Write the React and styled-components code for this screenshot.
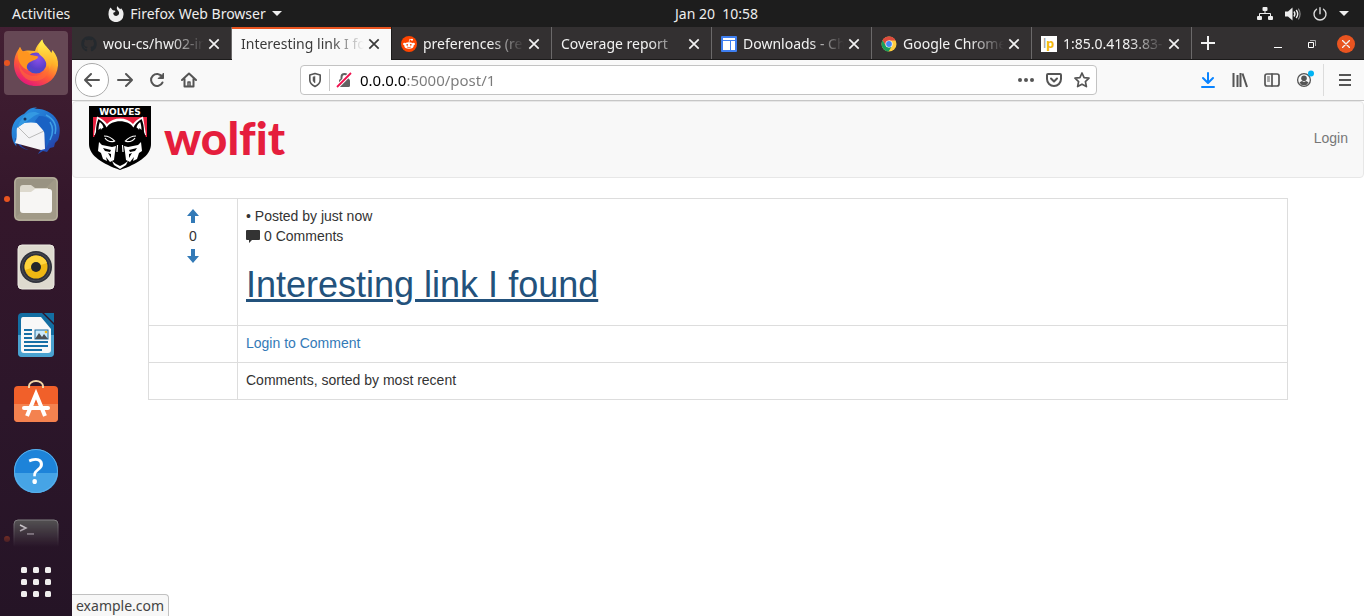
import React from "react";
import styled, { createGlobalStyle, css } from "styled-components";
import { FaGithub } from "react-icons/fa";

const uiFont = '"Noto Sans", "Open Sans", sans-serif';
const pageFont = '"Liberation Sans", Arial, sans-serif';

const GlobalStyle = createGlobalStyle`
  *, *::before, *::after { box-sizing: border-box; }
  body { margin: 0; background: #fff; }
  button { border: 0; padding: 0; background: none; color: inherit; font: inherit; cursor: pointer; }
  svg { display: block; flex: none; }
`;

/* ---------- desktop shell ---------- */

const Desktop = styled.div`
  display: flex;
  flex-direction: column;
  height: 100vh;
  font: 14px/20px ${uiFont};
`;

const TopBar = styled.header`
  display: grid;
  grid-template-columns: 1fr auto 1fr;
  align-items: center;
  flex: none;
  height: 27px;
  padding: 0 15px 0 12px;
  background: #1d1d1d;
  color: #eee;
`;

const TopGroup = styled.div`
  display: flex;
  align-items: center;
  justify-content: ${(p) => (p.$end ? "flex-end" : "flex-start")};
  gap: ${(p) => (p.$end ? "12px" : "38px")};
`;

const TopButton = styled.button`
  display: flex;
  align-items: center;
  gap: 6px;
`;

const Clock = styled.time`
  margin-left: 72px;
  white-space: pre;
`;

const Workspace = styled.div`
  display: flex;
  flex: 1;
  min-height: 0;
`;

/* ---------- dock ---------- */

const Dock = styled.nav`
  display: flex;
  flex-direction: column;
  flex: none;
  width: 72px;
  background: linear-gradient(#431f33, #34172b 30%, #2c162a 65%, #251426);
`;

const DockList = styled.div`
  display: flex;
  flex-direction: column;
  gap: 4px;
  flex: 1;
  min-height: 0;
  padding: 4px 4px 0;
  overflow: hidden;
  mask-image: linear-gradient(#000 calc(100% - 28px), transparent);
`;

const DockButton = styled.button`
  position: relative;
  display: grid;
  place-items: center;
  flex: none;
  height: 64px;
  border-radius: 4px;
  background: ${(p) => (p.$active ? "#664855" : "transparent")};
  ${(p) =>
    p.$running &&
    css`
      &::before {
        content: "";
        position: absolute;
        left: 0;
        top: 29px;
        width: 6px;
        height: 6px;
        border-radius: 50%;
        background: #e95420;
      }
    `}
`;

const AppsButton = styled.button`
  display: grid;
  place-items: center;
  flex: none;
  height: 69px;
`;

/* ---------- browser ---------- */

const Browser = styled.section`
  display: flex;
  flex-direction: column;
  flex: 1;
  min-width: 0;
`;

const TabStrip = styled.div`
  display: flex;
  flex: none;
  height: 33px;
  background: #333031;
  border-bottom: 1px solid #1c1b1b;
  color: #f2f2f2;
`;

const Tab = styled.div`
  display: flex;
  align-items: center;
  flex: 0 1 160px;
  min-width: 0;
  padding: 2px 7px 0 9px;
  border-right: 1px solid #6b696a;
  ${(p) =>
    p.$active &&
    css`
      height: 33px;
      padding-top: 1px;
      background: #f9f9f9;
      color: #3a3a3a;
      border-right-color: #1c1b1b;
      box-shadow: inset 0 2px #e95420;
    `}
`;

const TabLabel = styled.button`
  display: flex;
  align-items: center;
  gap: 6px;
  flex: 1;
  min-width: 0;
  overflow: hidden;
  white-space: nowrap;
  mask-image: linear-gradient(90deg, #000 calc(100% - 34px), transparent);
`;

const TabClose = styled.button`
  display: grid;
  place-items: center;
  width: 20px;
  height: 20px;
`;

const NewTab = styled.button`
  display: grid;
  place-items: center;
  width: 32px;
`;

const WindowControls = styled.div`
  display: flex;
  align-items: center;
  gap: 16px;
  margin-left: auto;
  padding: 2px 9px 0 0;
`;

const WindowButton = styled.button`
  display: grid;
  place-items: center;
  width: 18px;
  height: 18px;
  border-radius: 50%;
  background: ${(p) => (p.$close ? "#e95420" : "none")};
`;

const Toolbar = styled.div`
  display: flex;
  align-items: center;
  flex: none;
  height: 41px;
  padding: 0 3px;
  background: #f9f9f9;
  border-bottom: 1px solid #c6c6c6;
  color: #555;
`;

const ToolButton = styled.button`
  display: grid;
  place-items: center;
  flex: none;
  width: 32px;
  height: 32px;
`;

const BackButton = styled(ToolButton)`
  width: 34px;
  height: 34px;
  border: 1px solid #aaa;
  border-radius: 50%;
  background: #fff;
`;

const MenuArea = styled.div`
  display: flex;
  margin-left: 3px;
  padding-left: 5px;
  border-left: 1px solid #dcdcdc;
`;

const AddressBar = styled.form`
  display: flex;
  align-items: center;
  flex: 1;
  min-width: 0;
  height: 30px;
  margin: 0 95px;
  padding: 0 6px;
  background: #fff;
  border: 1px solid #c3c3c3;
  border-radius: 4px;
`;

const SiteInfo = styled.div`
  display: flex;
  align-items: center;
  gap: 6px;
`;

const Divider = styled.span`
  width: 1px;
  height: 22px;
  background: #c8c8c8;
`;

const PageActions = styled.div`
  display: flex;
  gap: 12px;
`;

const AddressInput = styled.input`
  flex: 1;
  min-width: 0;
  margin: 0 8px;
  padding: 0;
  border: 0;
  outline: 0;
  font: 15px/22px ${uiFont};
  color: #333;
  background: linear-gradient(90deg, #000 47px, #7a7a7a 47px);
  background-clip: text;
  -webkit-text-fill-color: transparent;
`;

/* ---------- web page ---------- */

const Page = styled.main`
  position: relative;
  flex: 1;
  min-height: 0;
  overflow: hidden;
  background: #fff;
  color: #333;
  font: 14px/20px ${pageFont};
`;

const Navbar = styled.nav`
  display: flex;
  align-items: center;
  justify-content: space-between;
  height: 77px;
  margin-bottom: 20px;
  padding: 0 15px 4px 16px;
  background: #f8f8f8;
  border: 1px solid #e7e7e7;
  border-radius: 4px;
`;

const Brand = styled.a`
  display: flex;
  align-items: center;
  gap: 13px;
  color: #e51e3d;
  font: 900 46px/60px Lato, sans-serif;
  font-variant-ligatures: none;
  text-decoration: none;
`;

const NavLink = styled.a`
  color: #777;
  text-decoration: none;
`;

const Container = styled.div`
  max-width: 1170px;
  margin: 0 auto;
  padding: 0 15px;
`;

const PostTable = styled.table`
  width: 100%;
  border-collapse: collapse;
  table-layout: fixed;
`;

const Cell = styled.td`
  padding: 7px 8px 9px;
  border: 1px solid #ddd;
  vertical-align: top;
  text-align: ${(p) => (p.$votes ? "center" : "left")};
  width: ${(p) => (p.$votes ? "89px" : "auto")};
`;

const VoteLink = styled.a`
  display: grid;
  place-items: center;
  height: 20px;
  color: #337ab7;
`;

const CommentCount = styled.div`
  display: flex;
  align-items: center;
  gap: 4px;
`;

const Title = styled.h1`
  margin: 19px 0 11px;
  font: 400 36px/40px ${pageFont};
`;

const TitleLink = styled.a`
  color: #23527c;
  text-decoration: underline;
`;

const TextLink = styled.a`
  color: #337ab7;
  text-decoration: none;
`;

const StatusPanel = styled.div`
  position: absolute;
  left: 0;
  bottom: 0;
  height: 22px;
  padding: 0 4px;
  background: #f7f7f7;
  border: 1px solid #c1c1c1;
  border-width: 1px 1px 0 0;
  border-top-right-radius: 4px;
  color: #444;
  font: 14px/22px ${uiFont};
`;

/* ---------- icons ---------- */

const Line = ({ size = 16, w = 2, children, ...rest }) => (
  <svg width={size} height={size} viewBox={`0 0 ${size} ${size}`} fill="none" stroke="currentColor" strokeWidth={w} strokeLinecap="round" strokeLinejoin="round" aria-hidden="true" {...rest}>
    {children}
  </svg>
);

const CrossIcon = () => (
  <Line size={12} w={1.7} strokeLinecap="butt">
    <path d="M1.3 1.3 10.7 10.7M10.7 1.3 1.3 10.7" />
  </Line>
);

const Caret = () => (
  <svg width="10" height="5" viewBox="0 0 10 5" fill="currentColor" aria-hidden="true">
    <path d="M0 0H10L5 5Z" />
  </svg>
);

const FirefoxSymbol = () => (
  <svg width="16" height="16" viewBox="0 0 16 16" aria-hidden="true">
    <path fill="#eee" d="M1.500 3 2.600 1.500 4.500 4c.8.600 2 .3 3 .900-.2 1.200-1.600 1.400-2.300 2 .1 2 1.400 3 3 3 2.300 0 3.400-2 2.700-4C10.200 4.200 7.500 3.500 9.500 0c.4 1.700 1.800 2.200 2.800 3.300l.8-1.100c1.600 1.800 2.700 3.800 2.400 6.500A7.500 7.400 0 0 1 .5 8.700C.4 6.500.7 4.700 1.500 3Z" />
  </svg>
);

const NetworkIcon = () => (
  <svg width="16" height="14" viewBox="0 0 16 14" fill="#eee" aria-hidden="true">
    <rect x="5.500" y="0" width="5" height="4" rx="1" />
    <rect x="0" y="9" width="5" height="4" rx="1" />
    <rect x="11" y="9" width="5" height="4" rx="1" />
    <path fill="none" stroke="#eee" d="M8 4v2.500M2.500 9V6.500h11V9" />
  </svg>
);

const VolumeIcon = () => (
  <svg width="16" height="14" viewBox="0 0 16 14" aria-hidden="true">
    <path fill="#eee" d="M0 4.500h3L7.500.5v13L3 9.500H0Z" />
    <path fill="none" stroke="#eee" strokeWidth="1.400" d="M9 4.500q1.800 2.500 0 5M11.200 3q3 4 0 8" />
    <path fill="none" stroke="#888" strokeWidth="1.200" d="M13.300 1.600q3.600 5.400 0 10.800" />
  </svg>
);

const PowerIcon = () => (
  <Line size={14} w={1.4} color="#ddd">
    <path d="M3.500 2.200a6 6 0 1 0 7 0M7 .7v6" />
  </Line>
);

const FirefoxIcon = () => (
  <svg width="48" height="48" viewBox="0 0 48 48" aria-hidden="true">
    <defs>
      <linearGradient id="fxBody" x1=".8" y1=".05" x2=".3" y2="1">
        <stop offset="0" stopColor="#fff04a" />
        <stop offset=".35" stopColor="#ffb129" />
        <stop offset=".65" stopColor="#ff5a36" />
        <stop offset="1" stopColor="#e3157c" />
      </linearGradient>
      <radialGradient id="fxGlobe" cx=".6" cy=".3" r=".8">
        <stop offset="0" stopColor="#8a4fe8" />
        <stop offset=".6" stopColor="#5a3fc9" />
        <stop offset="1" stopColor="#3b53c4" />
      </radialGradient>
      <linearGradient id="fxTail" x1="0" y1="0" x2="0" y2="1">
        <stop offset="0" stopColor="#fff450" />
        <stop offset="1" stopColor="#ff9a1f" />
      </linearGradient>
    </defs>
    <path fill="url(#fxBody)" d="M4 15C5 12 7 10 8 8c.8 2 1.500 3 3 4.500 3-1.500 8-1 12-.5 1-4 3.500-7.500 7.200-11.500 1 5 4.200 6.700 7 10.500 1 1.200 1.600 2 2 3l1.300-3c4 5 6 10 5.500 15.500C45 39 35.500 47 24 47 12 47 2.500 38.500 2 26c0-4 .5-8 2-11Z" />
    <circle cx="24" cy="24" r="10.500" fill="url(#fxGlobe)" />
    <path fill="url(#fxTail)" d="M30.200.5c1 5 4.200 6.700 7 10.500 5 7 3 18-3 22 2-6 0-12-5-16-4-3-5-8 1-16.500Z" />
    <path fill="#ff951f" d="M8 8c.8 2 1.500 3 3 4.500 3-1 6 0 7.500 3.500 3 .5 5.500.8 7.800 1.700-1 3.300-5.300 3.300-8.300 5.300-3 1.500-4 5-2.500 8C9 28 5 22 6 13Z" />
    <path fill="#ff6a35" opacity=".6" d="M7 25c3 9 11 14 20 11 5-1.500 8-5 9-10 3 7-2 15-12 16C14 43 7 35 7 25Z" />
  </svg>
);

const ThunderbirdIcon = () => (
  <svg width="50" height="48" viewBox="0 0 50 48" aria-hidden="true">
    <defs>
      <linearGradient id="tbBody" x1="0" y1="0" x2="1" y2="1">
        <stop offset="0" stopColor="#2d9be8" />
        <stop offset=".6" stopColor="#1f69c9" />
        <stop offset="1" stopColor="#28319a" />
      </linearGradient>
    </defs>
    <path fill="url(#tbBody)" d="M15 5C18 1 23 0 26 .5L23 2c9-1 18 3 23 11 4 7 3 15 1 20l-3 3-1 4-4 1-3 4-4-1-5 3c2-4 4-4 5-8L8 35c-2 0-4 2-2 5C1 35 0 28 1 21 3 13 8 9 13 7Z" />
    <path fill="#1d3f9f" d="M4 31c2 7 8 12 14 12-5-1-9-5-10-9Z" />
    <path fill="#f4f4f6" d="M6 21 13 16c7-1 14-1 20 3l1 23-4 1L4 36C7 30 5 25 6 21Z" />
    <path fill="none" stroke="#bbb" d="m7 20 11 11 15-7" />
    <path fill="#1a62c4" d="M28 9c12 0 16 8 14 18l-7 14c0-8 1-14-4-19l-7-8Z" />
    <path fill="#3499e2" d="M11 12C13 7 22 2 29 7c-5 0-8 4-14 8l-8 5c0-3 2-6 4-8Z" />
    <path fill="none" stroke="#3f9fe6" strokeWidth="1.500" d="M35 8c8 4 11 11 9 19M39 15c4 6 3 12 0 18" />
    <circle cx="14" cy="12" r="1.500" fill="#16345f" />
  </svg>
);

const FilesIcon = () => (
  <svg width="46" height="46" viewBox="0 0 46 46" aria-hidden="true">
    <rect x="1" y="1" width="44" height="44" rx="5" fill="#a19a87" />
    <path fill="#969080" d="M5 2h38L2 42V5q0-3 3-3Z" opacity=".7" />
    <rect x="2" y="2" width="42" height="42" rx="4" fill="none" stroke="#b8b19f" />
    <path fill="#ddd9cd" d="M7 12q0-3 3-3h8l4 3h13v10H7Z" />
    <rect x="7" y="13" width="32" height="24" rx="3" fill="#f7f6f4" />
    <path fill="#ddd9cd" d="M7 13h15l-4 3H7Z" />
  </svg>
);

const RhythmboxIcon = () => (
  <svg width="38" height="46" viewBox="0 0 38 46" aria-hidden="true">
    <rect x="1" y="1" width="36" height="44" rx="4" fill="#dedacf" stroke="#eceae2" />
    <circle cx="19" cy="23" r="16" fill="#30323b" />
    <circle cx="19" cy="23" r="14" fill="none" stroke="#4b4d55" />
    <circle cx="19" cy="23" r="11.500" fill="#efb813" />
    <path fill="#ffd53d" d="M19 11.500A11.500 11.500 0 0 0 8 26l22-7a11.500 11.500 0 0 0-11-7.500Z" />
    <circle cx="19" cy="23" r="5" fill="#25262a" />
  </svg>
);

const WriterIcon = () => (
  <svg width="38" height="46" viewBox="0 0 38 46" aria-hidden="true">
    <path fill="#136ea2" d="M5 1h20l12 12v28q0 4-4 4H5q-4 0-4-4V5q0-4 4-4Z" />
    <path fill="#4aa2d0" d="M1 23h36v18q0 4-4 4H5q-4 0-4-4Z" />
    <path fill="#136ea2" d="M27 1h10v10Z" />
    <path fill="#f8f8f8" d="M6 5h18l10 12v21q0 3-3 3H7q-3 0-3-3V8q0-3 2-3Z" />
    <path stroke="#176fa6" strokeWidth="2" d="M7 18h8M7 22h8M7 26h8M7 30h24M7 34h24M7 38h18" />
    <rect x="18" y="18" width="13" height="9" fill="#cae9fb" stroke="#1c6ea4" />
    <path fill="#4b5055" d="m18 27 4-6 3 4 2-3 4 5Z" />
    <circle cx="29" cy="20" r="1.300" fill="#f5b915" />
  </svg>
);

const SoftwareIcon = () => (
  <svg width="46" height="46" viewBox="0 0 46 46" aria-hidden="true">
    <rect x="1" y="6" width="44" height="36" rx="4" fill="#f1602a" />
    <path fill="#f4824f" d="M1 24h44v14q0 4-4 4H5q-4 0-4-4Z" />
    <path fill="none" stroke="#f3d6a5" strokeWidth="2" d="M16 8V6a7 5 0 0 1 14 0v2" />
    <path fill="none" stroke="#fff" strokeWidth="4" d="m14 36 9-22 9 22" />
    <rect x="9" y="26" width="28" height="4" rx="2" fill="#fff" />
  </svg>
);

const HelpIcon = () => (
  <svg width="46" height="46" viewBox="0 0 46 46" aria-hidden="true">
    <circle cx="23" cy="23" r="22" fill="#1d83d9" />
    <path fill="#46a4e6" d="M1 25a22 20 0 0 0 44 0Z" />
    <circle cx="23" cy="23" r="21.500" fill="none" stroke="#5bb0ea" />
    <text x="23" y="36" fill="#fff" fontFamily="Noto Sans, sans-serif" fontSize="36" textAnchor="middle">?</text>
  </svg>
);

const TerminalIcon = () => (
  <svg width="46" height="40" viewBox="0 0 46 40" aria-hidden="true">
    <rect x="1" y="1" width="44" height="38" rx="4" fill="#555354" stroke="#858485" />
    <path fill="none" stroke="#fff" strokeWidth="1.500" d="m7 6 6 3-6 3M14 15h7" />
  </svg>
);

const AppsIcon = () => (
  <svg width="30" height="30" viewBox="0 0 30 30" fill="#f0eeee" aria-hidden="true">
    {[0, 12, 24].map((y) => [0, 12, 24].map((x) => <rect key={`${x}-${y}`} x={x} y={y} width="6" height="6" rx="1.500" />))}
  </svg>
);

const RedditIcon = () => (
  <svg width="16" height="16" viewBox="0 0 16 16" aria-hidden="true">
    <circle cx="8" cy="8" r="8" fill="#ff4500" />
    <ellipse cx="8" cy="9.500" rx="4.700" ry="3.300" fill="#fff" />
    <circle cx="3.400" cy="8" r="1.300" fill="#fff" />
    <circle cx="12.600" cy="8" r="1.300" fill="#fff" />
    <circle cx="11" cy="3.800" r="1" fill="#fff" />
    <path fill="none" stroke="#fff" strokeWidth=".7" d="m8 6.500.7-3.200 2.300.5" />
    <circle cx="6.200" cy="8.800" r=".9" fill="#ff4500" />
    <circle cx="9.800" cy="8.800" r=".9" fill="#ff4500" />
    <path fill="none" stroke="#ff4500" strokeWidth=".7" d="M6 11q2 1.200 4 0" />
  </svg>
);

const SitesIcon = () => (
  <svg width="16" height="16" viewBox="0 0 16 16" aria-hidden="true">
    <rect width="16" height="16" rx="1" fill="#3f7ff0" />
    <path fill="#fff" d="M2 2h12v2H2ZM2 5h7v9H2ZM10 5h4v9h-4Z" />
  </svg>
);

const ChromeIcon = () => (
  <svg width="16" height="16" viewBox="0 0 16 16" aria-hidden="true">
    <circle cx="8" cy="8" r="7.500" fill="#ffcd40" />
    <path fill="#dd4b3e" d="M1.500 4.200A7.500 7.500 0 0 1 14.600 4.500H8L4.900 9.700Z" />
    <path fill="#1a9e5c" d="M1.500 4.200 4.900 9.800 8 11.500l3-1.700-3.300 5.700A7.500 7.500 0 0 1 1.500 4.200Z" />
    <circle cx="8" cy="8" r="3.600" fill="#fff" />
    <circle cx="8" cy="8" r="2.900" fill="#4688f4" />
  </svg>
);

const LaunchpadIcon = () => (
  <svg width="16" height="16" viewBox="0 0 16 16" aria-hidden="true">
    <rect width="16" height="16" fill="#fff" />
    <text x="2" y="12" fontFamily="Noto Sans, sans-serif" fontSize="13" fill="#999">
      l<tspan fill="#f3b90d" fontWeight="700">p</tspan>
    </text>
  </svg>
);

const InsecureIcon = () => (
  <svg width="16" height="16" viewBox="0 0 16 16" aria-hidden="true">
    <rect x="3" y="7" width="11" height="8" rx="1.500" fill="#616161" />
    <path fill="none" stroke="#616161" strokeWidth="2" d="M5.500 7V5a3 3 0 0 1 6 0v2" />
    <path stroke="#fff" strokeWidth="4" d="M1 15 15 1" />
    <path stroke="#f0114e" strokeWidth="1.800" d="M1 15 15 1" />
  </svg>
);

const AccountIcon = () => (
  <svg width="20" height="20" viewBox="0 0 20 20" aria-hidden="true">
    <circle cx="10" cy="10" r="6.400" fill="none" stroke="#555" strokeWidth="1.300" />
    <circle cx="10" cy="8.300" r="2.800" fill="#555" />
    <path fill="#555" d="M5.500 12.500q1.500-1.500 2.500-1.500l2 1 2-1q1 0 2.500 1.500a5 5 0 0 1-9 0Z" />
    <circle cx="17" cy="3.500" r="3" fill="#00b3f4" />
  </svg>
);

const ArrowIcon = ({ down }) => (
  <svg width="12" height="14" viewBox="0 0 12 14" fill="currentColor" aria-hidden="true">
    <path d={down ? "M4 0h4v7h4L6 14 0 7h4Z" : "M4 14h4V7h4L6 0 0 7h4Z"} />
  </svg>
);

const CommentIcon = () => (
  <svg width="14" height="14" viewBox="0 0 14 14" fill="#333" aria-hidden="true">
    <path d="M1 1h12q1 0 1 1v8q0 1-1 1H6l-3 3v-3H1q-1 0-1-1V2q0-1 1-1Z" />
  </svg>
);

const WolfBadge = () => (
  <svg width="62" height="64" viewBox="0 0 62 64" role="img" aria-label="Wolves">
    <path d="M0 0h62v38c0 12-14 20-31 26C14 58 0 50 0 38Z" />
    <path fill="#e6203e" d="M4 11h54v20H4Z" />
    <path fill="#fff" d="M8 10.500c5 2 8 5 10 7.500 6-7.500 20-7.500 26 0 2-2.500 5-5.500 10-7.500L57 29H5Z" />
    <path d="M4 34 7 26c0-6 1-10 2.500-13 4 2.500 6.500 5 8 8.500 5-8.500 22-8.500 27 0 1.500-3.500 4-6 8-8.500C54 16 55 20 55 26l3 8-2 7-8 8-13 7H27l-13-7-8-8Z" />
    <path fill="#fff" d="M9.500 24c0-3 .5-6 1.300-8 2 1.500 3.300 3.500 3.700 5.500-1 .5-2 1-2.500 2.500l-.5-2ZM52.500 24c0-3-.5-6-1.300-8-2 1.500-3.300 3.500-3.700 5.500 1 .5 2 1 2.500 2.500l.5-2Z" />
    <path fill="none" stroke="#fff" strokeWidth="1.200" d="M15 30c4 0 8 2 11 5.500M16 32c2 3 5 4 9 3.500M47 30c-4 0-8 2-11 5.500M46 32c-2 3-5 4-9 3.500M28.500 39l-.5 7M33.500 39l.5 7" />
    <path fill="#fff" d="m10 36 3 3 5 1 5 1 4-1-1 6-1 8-4 2-4-5 1 4-4-2-2-6-3-2ZM52 36l-3 3-5 1-5 1-4-1 1 6 1 8 4 2 4-5-1 4 4-2 2-6 3-2Z" />
    <path d="m14 42 8 2-1 2-5-1ZM48 42l-8 2 1 2 5-1ZM19 47l3 1v4ZM43 47l-3 1v4Z" />
    <path fill="#fff" d="m23 55 4 3 4 2 4-2 4-3-2 4-6 4-6-4Z" />
    <path d="m26 53 5-1 5 1-1 4-4 2-4-2Z" />
    <text x="31" y="9" fill="#fff" fontFamily="DejaVu Sans, sans-serif" fontWeight="700" fontSize="9" textAnchor="middle">WOLVES</text>
  </svg>
);

/* ---------- data ---------- */

const dockApps = [
  { name: "Firefox", icon: <FirefoxIcon />, active: true, running: true },
  { name: "Thunderbird", icon: <ThunderbirdIcon /> },
  { name: "Files", icon: <FilesIcon />, running: true },
  { name: "Rhythmbox", icon: <RhythmboxIcon /> },
  { name: "Writer", icon: <WriterIcon /> },
  { name: "Software", icon: <SoftwareIcon /> },
  { name: "Help", icon: <HelpIcon /> },
  { name: "Terminal", icon: <TerminalIcon />, running: true },
];

const tabs = [
  { title: "wou-cs/hw02-in", icon: <FaGithub size={16} color="#24292e" /> },
  { title: "Interesting link I fo", active: true },
  { title: "preferences (re", icon: <RedditIcon /> },
  { title: "Coverage report" },
  { title: "Downloads - Ch", icon: <SitesIcon /> },
  { title: "Google Chrome", icon: <ChromeIcon /> },
  { title: "1:85.0.4183.83-", icon: <LaunchpadIcon /> },
];

export default function App() {
  return (
    <Desktop>
      <GlobalStyle />
      <TopBar>
        <TopGroup>
          <TopButton>Activities</TopButton>
          <TopButton><FirefoxSymbol />Firefox Web Browser<Caret /></TopButton>
        </TopGroup>
        <Clock>{"Jan 20  10:58"}</Clock>
        <TopGroup $end>
          <NetworkIcon />
          <VolumeIcon />
          <PowerIcon />
          <Caret />
        </TopGroup>
      </TopBar>

      <Workspace>
        <Dock aria-label="Dock">
          <DockList>
            {dockApps.map((app) => (
              <DockButton key={app.name} aria-label={app.name} $active={app.active} $running={app.running}>
                {app.icon}
              </DockButton>
            ))}
          </DockList>
          <AppsButton aria-label="Show applications"><AppsIcon /></AppsButton>
        </Dock>

        <Browser>
          <TabStrip>
            {tabs.map((tab) => (
              <Tab key={tab.title} $active={tab.active}>
                <TabLabel>{tab.icon}{tab.title}</TabLabel>
                <TabClose aria-label="Close tab"><CrossIcon /></TabClose>
              </Tab>
            ))}
            <NewTab aria-label="New tab">
              <Line size={14} w={2} strokeLinecap="butt"><path d="M7 0v14M0 7h14" /></Line>
            </NewTab>
            <WindowControls>
              <WindowButton aria-label="Minimize">
                <svg width="8" height="9" viewBox="0 0 8 9"><path fill="#fff" d="M0 7h8v1H0Z" /></svg>
              </WindowButton>
              <WindowButton aria-label="Restore">
                <svg width="8" height="8" viewBox="0 0 8 8" fill="none"><path stroke="#aaa" d="M2 .5h5.500V6" /><path stroke="#fff" d="M.5 2.500h5v5h-5Z" /></svg>
              </WindowButton>
              <WindowButton $close aria-label="Close window">
                <Line size={8} w={1.4}><path d="m.5.5 7 7m0-7-7 7" /></Line>
              </WindowButton>
            </WindowControls>
          </TabStrip>

          <Toolbar>
            <BackButton aria-label="Back"><Line><path d="M15 8H1M7 2 1 8l6 6" /></Line></BackButton>
            <ToolButton aria-label="Forward"><Line><path d="M1 8h14M9 2l6 6-6 6" /></Line></ToolButton>
            <ToolButton aria-label="Reload">
              <Line><path d="M13.500 10.500A6 6 0 1 1 13 4.500" /><path fill="currentColor" strokeWidth="1" d="M14.500 1.500v5h-5Z" /></Line>
            </ToolButton>
            <ToolButton aria-label="Home">
              <Line><path d="m1 8 7-6.500L15 8M3.500 7v7.500h9V7" /><path strokeWidth="1.500" d="M7 14v-4h2v4" /></Line>
            </ToolButton>
            <AddressBar onSubmit={(e) => e.preventDefault()}>
              <SiteInfo>
                <Line w={1.6}><path d="M8 1.500 13.200 3v5c0 3-2 5-5.200 6.500C4.800 13 2.800 11 2.800 8V3Z" /><path d="M8 4.500V11c-1.500-1-2-2-2-3V5.200Z" fill="currentColor" strokeWidth=".5" /></Line>
                <Divider />
                <InsecureIcon />
              </SiteInfo>
              <AddressInput aria-label="Address" defaultValue="0.0.0.0:5000/post/1" />
              <PageActions>
                <svg width="16" height="16" viewBox="0 0 16 16" fill="currentColor" aria-hidden="true"><circle cx="2" cy="8" r="2" /><circle cx="8" cy="8" r="2" /><circle cx="14" cy="8" r="2" /></svg>
                <Line><path d="M2 2h12q1 0 1 1v4a7 7 0 0 1-14 0V3q0-1 1-1ZM5 6.500l3 3 3-3" /></Line>
                <Line w={1.7}><path d="m8 1 2.100 4.600 4.900.6-3.600 3.400 1 5L8 12.200l-4.400 2.400 1-5L1 6.200l4.900-.6Z" /></Line>
              </PageActions>
            </AddressBar>
            <ToolButton aria-label="Downloads">
              <Line color="#0a84ff"><path d="M8 1v9.500M3 6l5 5 5-5M2 15h12" /></Line>
            </ToolButton>
            <ToolButton aria-label="Library">
              <Line strokeLinecap="butt"><path d="M1.500 1v14M5.500 3v12M8.500 1v14M10.500 1.500 15 15" /></Line>
            </ToolButton>
            <ToolButton aria-label="Sidebars">
              <Line w={1.7}><rect x="1" y="2" width="14" height="12" rx="2" /><path d="M8 2v12" /><path strokeWidth="1" d="M3.500 5h2M3.500 7h2M3.500 9h2" /></Line>
            </ToolButton>
            <ToolButton aria-label="Account"><AccountIcon /></ToolButton>
            <MenuArea>
              <ToolButton aria-label="Menu"><Line strokeLinecap="butt"><path d="M2 3h12M2 8h12M2 13h12" /></Line></ToolButton>
            </MenuArea>
          </Toolbar>

          <Page>
            <Navbar>
              <Brand href="#home"><WolfBadge />wolfit</Brand>
              <NavLink href="#login">Login</NavLink>
            </Navbar>
            <Container>
              <PostTable>
                <tbody>
                  <tr>
                    <Cell $votes>
                      <VoteLink href="#up" aria-label="Vote up"><ArrowIcon /></VoteLink>
                      <div>0</div>
                      <VoteLink href="#down" aria-label="Vote down"><ArrowIcon down /></VoteLink>
                    </Cell>
                    <Cell>
                      <div>• Posted by just now</div>
                      <CommentCount><CommentIcon />0 Comments</CommentCount>
                      <Title><TitleLink href="#post">Interesting link I found</TitleLink></Title>
                    </Cell>
                  </tr>
                  <tr>
                    <Cell $votes />
                    <Cell><TextLink href="#login">Login to Comment</TextLink></Cell>
                  </tr>
                  <tr>
                    <Cell $votes />
                    <Cell>Comments, sorted by most recent</Cell>
                  </tr>
                </tbody>
              </PostTable>
            </Container>
            <StatusPanel>example.com</StatusPanel>
          </Page>
        </Browser>
      </Workspace>
    </Desktop>
  );
}
